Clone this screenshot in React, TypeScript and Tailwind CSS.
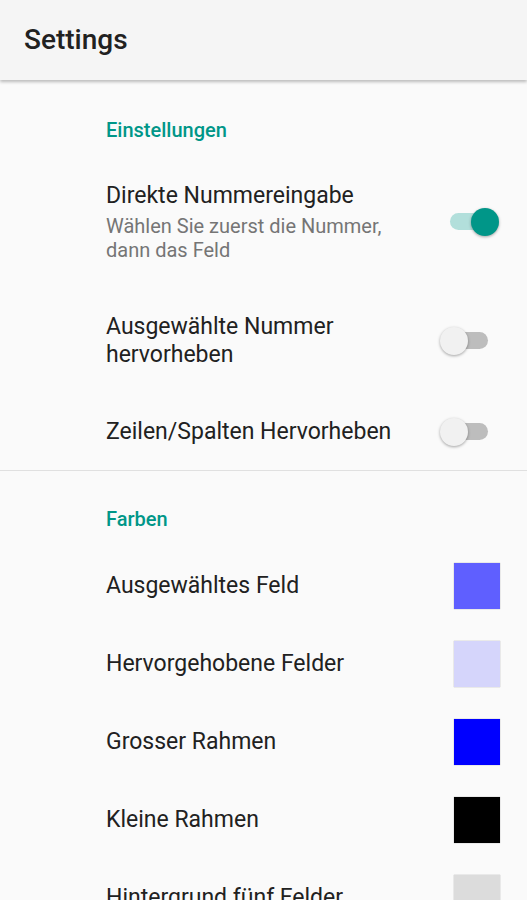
function Switch({ on }: { on: boolean }) {
  return (
    <div className="relative w-[60px] h-[30px] shrink-0">
      <div
        className={
          "absolute left-[10px] top-[6px] w-[38px] h-[17px] rounded-full " +
          (on ? "bg-[#b2dfdb]" : "bg-[#bdbdbd]")
        }
      />
      <div
        className={
          "absolute top-[1px] w-[28px] h-[28px] rounded-full shadow-[0_1px_3px_rgba(0,0,0,0.35)] " +
          (on ? "left-[31px] bg-[#009688]" : "left-0 bg-[#f1f1f1]")
        }
      />
    </div>
  );
}

function Swatch({ color }: { color: string }) {
  return (
    <div
      className="w-[46px] h-[46px] shrink-0 shadow-[0_0_1px_rgba(0,0,0,0.4)]"
      style={{ backgroundColor: color }}
    />
  );
}

const colors = [
  { label: "Ausgewähltes Feld", color: "#5f5fff" },
  { label: "Hervorgehobene Felder", color: "#d5d5fb" },
  { label: "Grosser Rahmen", color: "#0000ff" },
  { label: "Kleine Rahmen", color: "#000000" },
  { label: "Hintergrund fünf Felder", color: "#dcdcdc" },
];

export default function App() {
  return (
    <div className="w-[527px] h-[900px] overflow-hidden bg-[#fafafa] font-['Roboto',sans-serif]">
      <header className="relative z-10 h-[80px] bg-[#f5f5f5] flex items-center pl-[24px] shadow-[0_2px_3px_rgba(0,0,0,0.25)]">
        <h1 className="text-[28px] font-medium text-[#212121]">Settings</h1>
      </header>

      <section>
        <div className="pl-[106px] pt-[38px] pb-[18px] text-[20px] leading-[24px] font-medium text-[#009688]">
          Einstellungen
        </div>

        <div className="flex items-center pl-[106px] pr-[27px] pt-[22px] pb-[24px]">
          <div className="flex-1">
            <div className="text-[23px] leading-[28px] text-[#212121]">Direkte Nummereingabe</div>
            <div className="mt-[4px] text-[20px] leading-[24px] text-[#757575]">
              Wählen Sie zuerst die Nummer,
              <br />
              dann das Feld
            </div>
          </div>
          <Switch on />
        </div>

        <div className="flex items-center pl-[106px] pr-[27px] pt-[27px] pb-[23px]">
          <div className="flex-1 text-[23px] leading-[28px] text-[#212121]">
            Ausgewählte Nummer
            <br />
            hervorheben
          </div>
          <Switch on={false} />
        </div>

        <div className="flex items-center pl-[106px] pr-[27px] pt-[25px] pb-[23px]">
          <div className="flex-1 text-[23px] leading-[28px] text-[#212121]">
            Zeilen/Spalten Hervorheben
          </div>
          <Switch on={false} />
        </div>
      </section>

      <div className="h-px bg-[#e0e0e0]" />

      <section>
        <div className="pl-[106px] pt-[36px] pb-[16px] text-[20px] leading-[24px] font-medium text-[#009688]">
          Farben
        </div>
        {colors.map((c) => (
          <div key={c.label} className="flex items-center h-[78px] pl-[106px] pr-[27px]">
            <div className="flex-1 text-[23px] leading-[28px] text-[#212121]">{c.label}</div>
            <Swatch color={c.color} />
          </div>
        ))}
      </section>
    </div>
  );
}
